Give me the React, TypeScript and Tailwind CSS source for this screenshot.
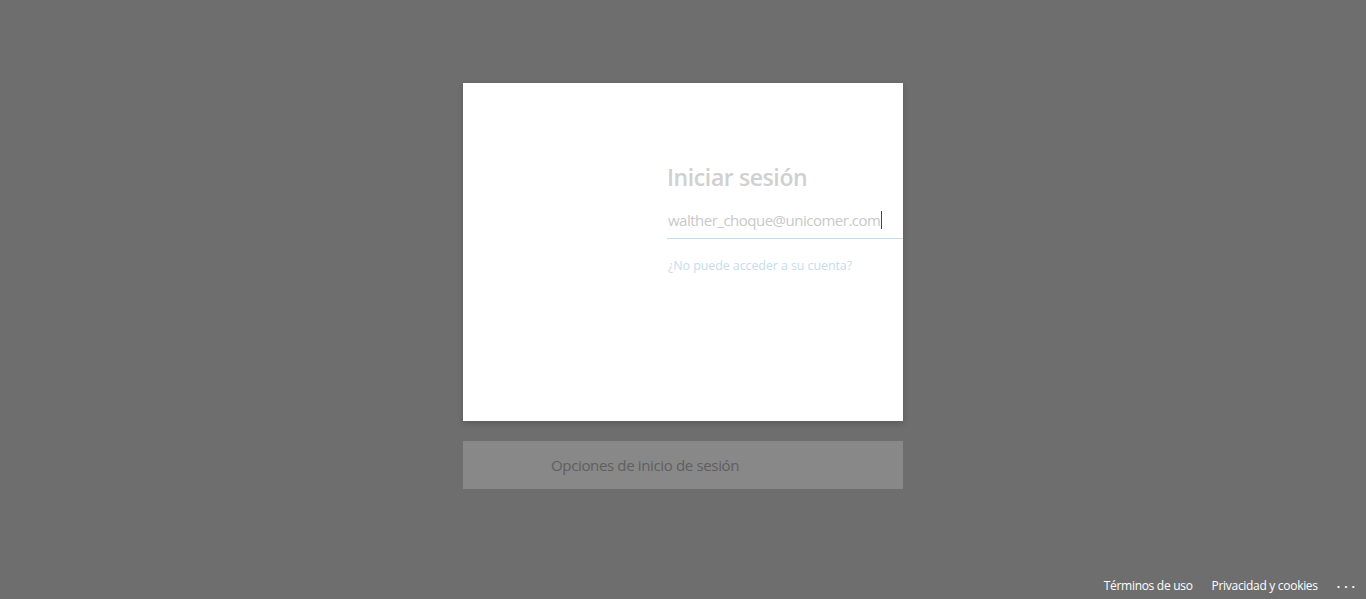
import React from 'react';

const font = { fontFamily: '"Open Sans", "Noto Sans", sans-serif' };

const App: React.FC = () => {
  return (
    <div className="relative w-full h-[599px] bg-[#6e6e6e] overflow-hidden" style={font}>
      <div className="flex flex-col items-center pt-[83px]">
        <div className="w-[440px] h-[338px] bg-white shadow-[0_2px_6px_rgba(0,0,0,0.2)] overflow-hidden">
          <div className="ml-[204px] w-[352px] pt-[78px]">
            <h1 className="text-[23px] leading-[32px] font-semibold text-[#d0d0d0] tracking-[-0.4px]">Iniciar sesión</h1>
            <div className="mt-[16px] pl-[1px] border-b border-[#c3ddf1] h-[30px] flex items-start">
              <span className="text-[15px] leading-[22px] text-[#c9c9c9] tracking-[-0.5px]">walther_choque@unicomer.com</span>
              <span className="ml-[1px] mt-[2px] w-[1px] h-[18px] bg-[#444]" />
            </div>
            <div className="mt-[18px] pl-[1px] text-[12.5px] leading-[18px] text-[#c6dcf0] tracking-[-0.1px]">¿No puede acceder a su cuenta?</div>
          </div>
        </div>
        <div className="mt-[20px] w-[440px] h-[48px] bg-[#888888] flex items-center pl-[88px]">
          <span className="text-[15px] text-[#5f5f5f] tracking-[-0.35px]">Opciones de inicio de sesión</span>
        </div>
      </div>
      <div className="absolute bottom-0 right-0 h-[26px] flex items-center pr-[7px] text-[12px] text-white tracking-[-0.3px]">
        <span>Términos de uso</span>
        <span className="ml-[19px]">Privacidad y cookies</span>
        <span className="ml-[19px] tracking-[4px] pb-[4px] font-bold">...</span>
      </div>
    </div>
  );
};

export default App;
